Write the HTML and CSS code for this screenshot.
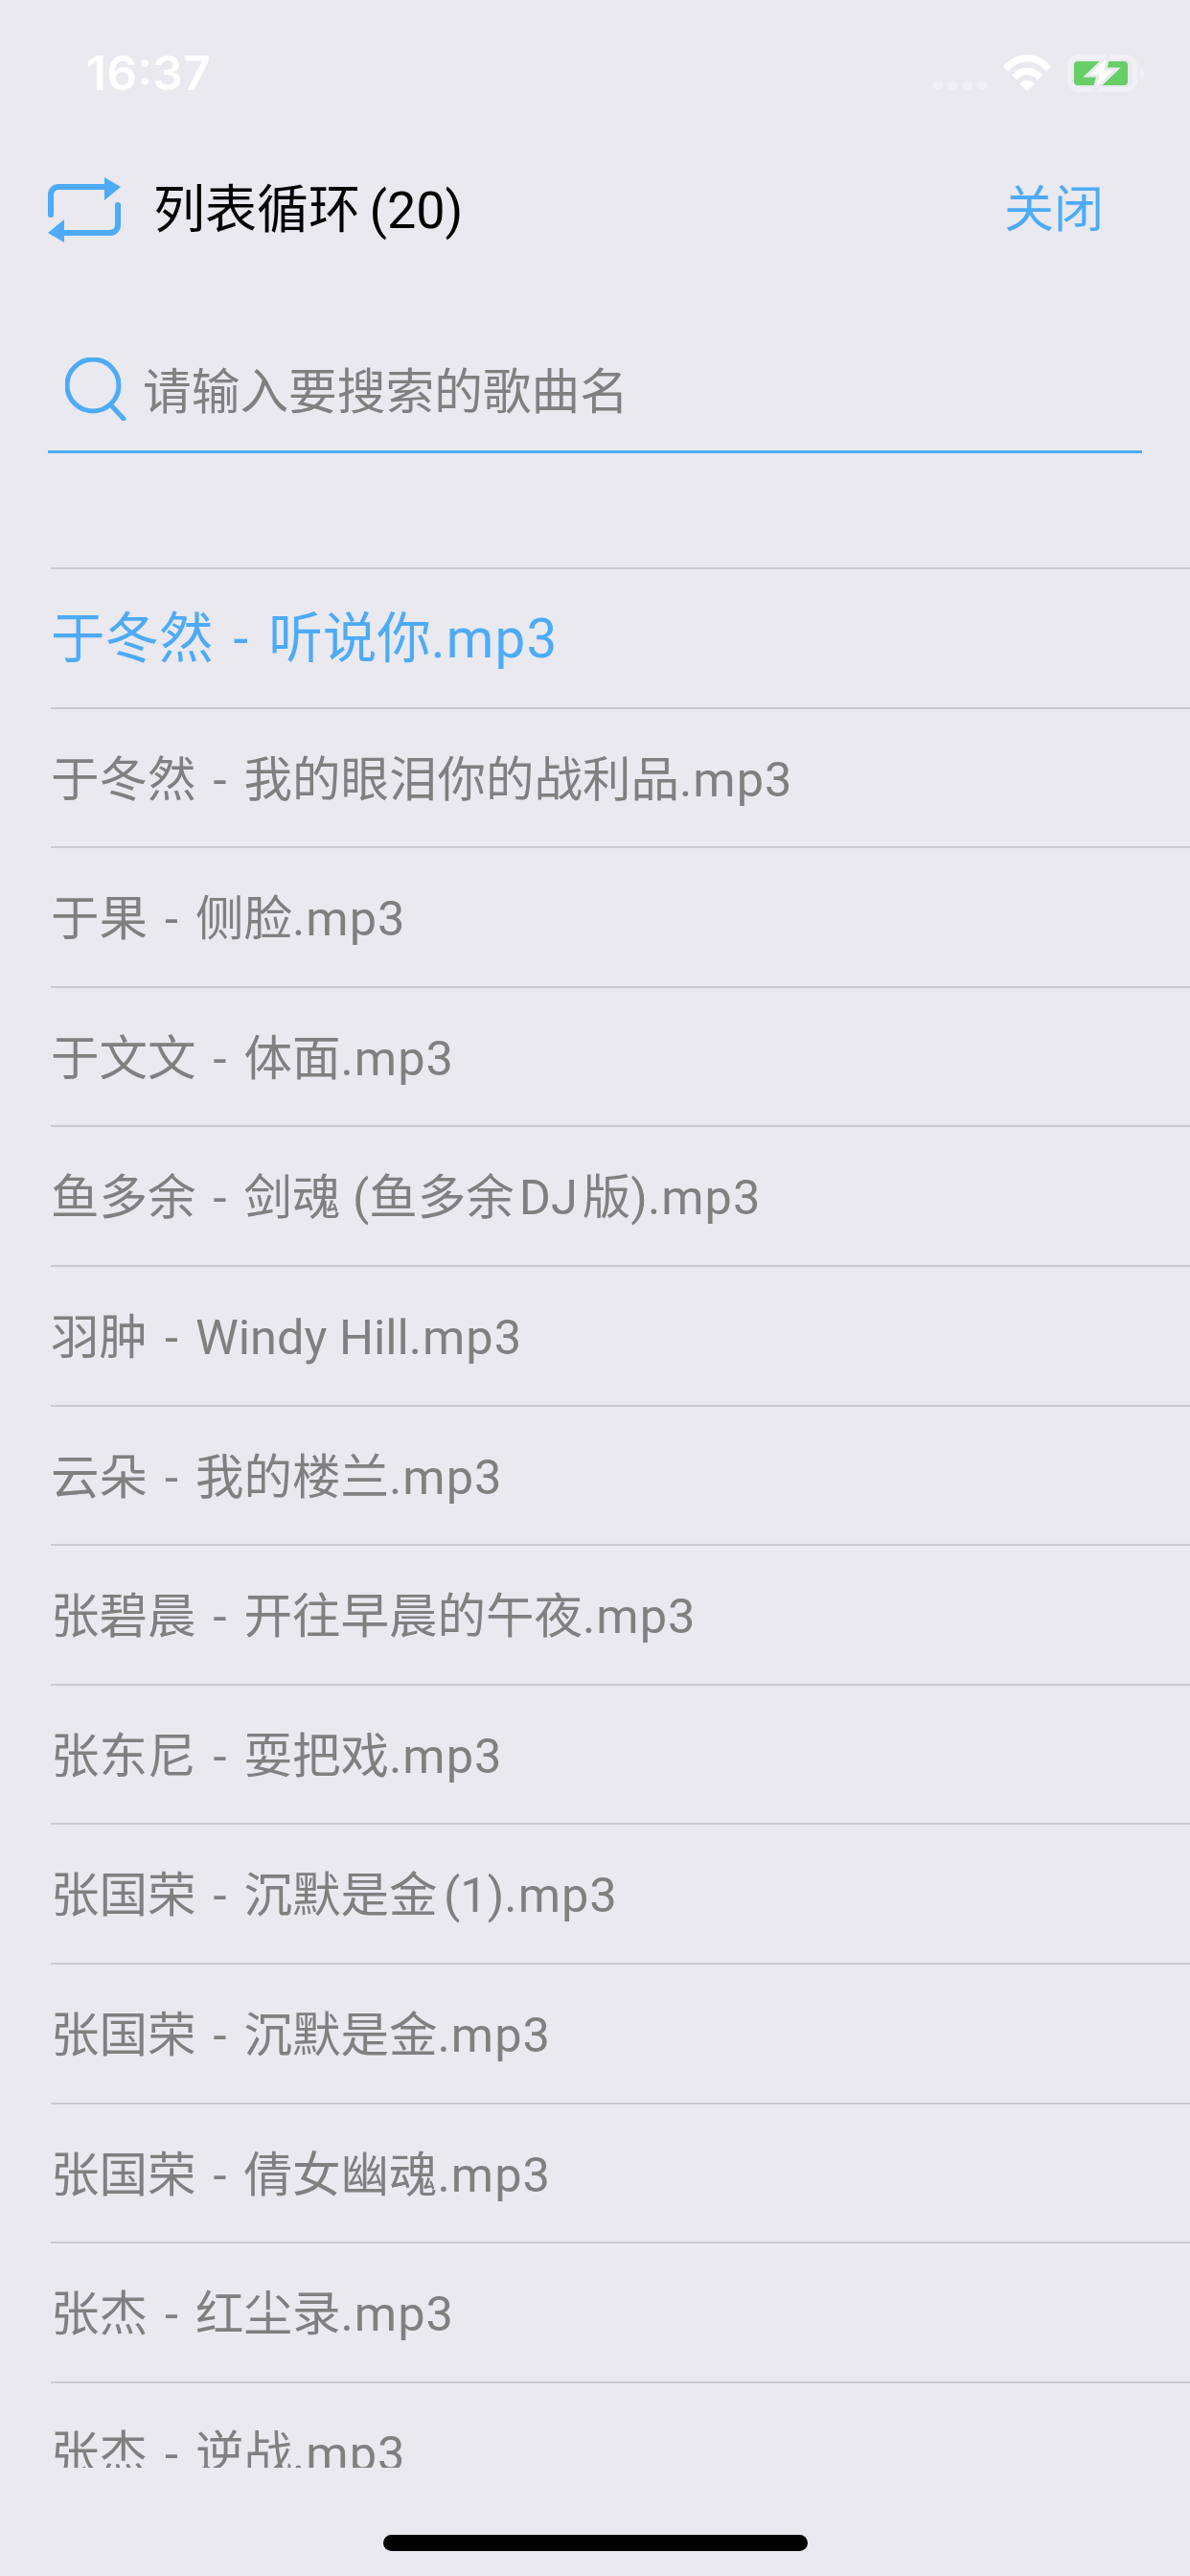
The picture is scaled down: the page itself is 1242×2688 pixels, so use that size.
FILE: index.html
```html
<!DOCTYPE html>
<html lang="zh">

<head>
	<meta charset="utf-8">
	<title>列表循环</title>
	<link rel="stylesheet" href="styles.css">
</head>

<body>
	<main id="player">
		<div class="statusbar">
			<span class="time">16:37</span>
			<div class="status-icons">
				<div class="signal">
					<span></span><span></span><span></span><span></span>
				</div>
				<svg class="wifi" width="50" height="38" viewBox="0 0 50 38">
					<path d="M0 12.500C6.500 4.500 15.500 0 25 0s18.500 4.500 25 12.500l-5 5.200C39.500 10.900 32.500 7.200 25 7.200S10.500 10.900 5 17.700z" />
					<path d="M9 21.500C13 16.500 18.800 13.600 25 13.600s12 2.900 16 7.900l-5 5.100c-2.700-3.300-6.600-5.300-11-5.300s-8.300 2-11 5.300z" />
					<path d="M17 30.500c2-2.400 4.900-3.800 8-3.800s6 1.400 8 3.800L25 38z" />
				</svg>
				<svg class="battery" width="80" height="40" viewBox="0 0 80 40">
					<rect x="2.500" y="2.500" width="68" height="34" rx="9" fill="none" stroke="#f1f1f5" stroke-width="5" />
					<path d="M76 13c2.500 1 4 3.500 4 6.500s-1.500 5.500-4 6.500z" fill="#f1f1f5" />
					<rect x="7" y="7" width="56" height="25" rx="4" fill="#66d066" />
					<path d="M43 0L20 22h12l-5 17 25-24H40z" fill="#fff" stroke="#e9e9ef" stroke-width="3" />
				</svg>
			</div>
		</div>

		<div class="topbar">
			<div class="mode">
				<svg class="mode-icon" width="76" height="68" viewBox="0 0 76 68">
					<path d="M3 39V18a8 8 0 0 1 8-8H60" />
					<path d="M59 0l17 10-17 14z" class="fill" />
					<path d="M73 29v21a8 8 0 0 1-8 8H16" />
					<path d="M17 44L0 58l17 10z" class="fill" />
				</svg>
				<span class="mode-name">列表循环 (20)</span>
			</div>
			<span class="close">关闭</span>
		</div>

		<div class="search">
			<svg class="search-icon" width="64" height="66" viewBox="0 0 64 66">
				<circle cx="29" cy="29" r="27" />
				<path d="M47 49l14 15" />
			</svg>
			<span class="placeholder">请输入要搜索的歌曲名</span>
		</div>

		<ul class="songs">
			<li class="song current">于冬然 <span class="sep">-</span> 听说你<span class="ext">.mp3</span></li>
			<li class="song">于冬然 <span class="sep">-</span> 我的眼泪你的战利品<span class="ext">.mp3</span></li>
			<li class="song">于果 <span class="sep">-</span> 侧脸<span class="ext">.mp3</span></li>
			<li class="song">于文文 <span class="sep">-</span> 体面<span class="ext">.mp3</span></li>
			<li class="song">鱼多余 <span class="sep">-</span> 剑魂 (鱼多余<span class="latin">DJ</span>版)<span class="ext">.mp3</span></li>
			<li class="song">羽肿 <span class="sep">-</span> Windy Hill<span class="ext">.mp3</span></li>
			<li class="song">云朵 <span class="sep">-</span> 我的楼兰<span class="ext">.mp3</span></li>
			<li class="song">张碧晨 <span class="sep">-</span> 开往早晨的午夜<span class="ext">.mp3</span></li>
			<li class="song">张东尼 <span class="sep">-</span> 耍把戏<span class="ext">.mp3</span></li>
			<li class="song">张国荣 <span class="sep">-</span> 沉默是金 <span class="copy-no">(1)</span><span class="ext">.mp3</span></li>
			<li class="song">张国荣 <span class="sep">-</span> 沉默是金<span class="ext">.mp3</span></li>
			<li class="song">张国荣 <span class="sep">-</span> 倩女幽魂<span class="ext">.mp3</span></li>
			<li class="song">张杰 <span class="sep">-</span> 红尘录<span class="ext">.mp3</span></li>
			<li class="song">张杰 <span class="sep">-</span> 逆战<span class="ext">.mp3</span></li>
		</ul>

		<div class="homebar"></div>
	</main>
</body>

</html>
```

FILE: styles.css
```css
html,
body {
	margin: 0;
	padding: 0;
	background-color: #e9e9ef;
}

#player {
	width: 1242px;
	height: 2688px;
	overflow: hidden;
	font-family: "Roboto", "Noto Sans CJK SC", sans-serif;
}

.statusbar {
	height: 132px;
	padding: 0 48px 0 90px;
	display: flex;
	justify-content: space-between;
	align-items: flex-start;
}

.time {
	margin-top: 47px;
	color: #fff;
	font-family: "Inter", sans-serif;
	font-size: 50px;
	line-height: 58px;
	font-weight: 600;
}

.status-icons {
	margin-top: 57px;
	display: flex;
	align-items: flex-start;
}

.signal {
	margin-top: 27px;
	margin-right: 17px;
	display: flex;
	gap: 5.500px;
}

.signal span {
	width: 10px;
	height: 10px;
	border-radius: 50%;
	background-color: #f1f1f5;
}

.wifi {
	fill: #fff;
	margin-right: 17px;
}

.topbar {
	height: 174px;
	padding: 0 90px 0 50px;
	display: flex;
	justify-content: space-between;
	align-items: center;
	box-sizing: border-box;
}

.mode {
	display: flex;
	align-items: center;
	gap: 34px;
}

.mode-icon {
	fill: none;
	stroke: #4dabf7;
	stroke-width: 6;
	stroke-linecap: round;
}

.mode-icon .fill {
	fill: #4dabf7;
	stroke: none;
}

.mode-name {
	font-size: 54px;
	color: #000;
	word-spacing: -4px;
	padding-bottom: 10px;
}

.close {
	font-size: 52px;
	color: #4dabf7;
	padding-bottom: 10px;
}

.search {
	margin: 0 50px;
	height: 167px;
	box-sizing: border-box;
	border-bottom: 3px solid #4dabf7;
	display: flex;
	align-items: center;
	gap: 17px;
	padding-left: 18px;
	padding-top: 64px;
	padding-bottom: 28px;
}

.search-icon {
	fill: none;
	stroke: #4dabf7;
	stroke-width: 5;
	stroke-linecap: round;
}

.placeholder {
	font-size: 50.700px;
	color: #808080;
	padding-bottom: 2px;
}

.songs {
	list-style: none;
	margin: 119px 0 0 53px;
	padding: 0;
	height: 1983px;
	overflow: hidden;
}

.song {
	height: 145.600px;
	box-sizing: border-box;
	border-top: 2px solid #c9c9ce;
	display: block;
	line-height: 147px;
	font-size: 50.500px;
	color: #808080;
	white-space: pre;
}

.song.current {
	font-size: 56.500px;
	color: #4dabf7;
}

.sep {
	margin: 0 5.500px;
}

.current .sep {
	margin: 0 7px;
}

.ext {
	letter-spacing: 1px;
}

.current .ext {
	letter-spacing: 1.200px;
}

.latin {
	margin: 0 5px;
}

.copy-no {
	margin-left: -6px;
}

.homebar {
	margin: 70px auto 0;
	width: 443px;
	height: 17px;
	border-radius: 9px;
	background-color: #000;
}
```
